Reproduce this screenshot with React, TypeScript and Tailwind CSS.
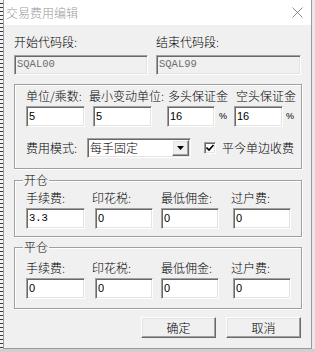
import { ReactNode } from "react"

const cjk = "font-['Noto_Sans_CJK_SC','Microsoft_YaHei',sans-serif] font-light"
const sunken =
    "border border-t-[#a0a0a0] border-l-[#a0a0a0] border-b-white border-r-white shadow-[inset_1px_1px_0_#696969,inset_-1px_-1px_0_#e3e3e3]"
const raised =
    "border border-t-white border-l-white border-b-[#696969] border-r-[#696969] shadow-[inset_-1px_-1px_0_#a0a0a0,inset_1px_1px_0_#e3e3e3]"

const Field = ({
    value,
    w,
    mono = false,
    disabled = false,
    h = "h-[21px]",
}: {
    value: string
    w: string
    mono?: boolean
    disabled?: boolean
    h?: string
}) => (
    <div
        className={`${w} ${h} ${sunken} flex items-center pl-[2px] font-normal ${
            disabled ? "bg-[#f0f0f0] text-[#6d6d6d]" : "bg-white text-black"
        } ${
            mono
                ? "font-['Liberation_Mono',monospace] text-[10.5px]"
                : "font-['Liberation_Sans',sans-serif] text-[11px]"
        }`}
    >
        {value}
    </div>
)

const Label = ({ children, w }: { children: ReactNode; w: string }) => (
    <div className={`${w} shrink-0 text-[12px] leading-[16px] whitespace-nowrap`}>
        {children}
    </div>
)

const Group = ({
    title,
    h,
    pt,
    children,
}: {
    title?: string
    h: string
    pt: string
    children: ReactNode
}) => (
    <div
        className={`relative ${h} ${pt} pl-[11px] border border-[#a0a0a0] shadow-[inset_1px_1px_0_#fff,1px_1px_0_#fff]`}
    >
        {title && (
            <span className="absolute left-[8px] top-[-9px] bg-[#f0f0f0] px-px text-[12px] leading-[16px]">
                {title}
            </span>
        )}
        {children}
    </div>
)

const FeeRows = ({ first }: { first: string }) => (
    <>
        <div className="flex">
            <Label w="w-[66px]">手续费:</Label>
            <Label w="w-[69px]">印花税:</Label>
            <Label w="w-[70px]">最低佣金:</Label>
            <Label w="w-auto">过户费:</Label>
        </div>
        <div className="flex mt-[2px]">
            <Field value={first} w="w-[59px]" mono={first.includes(".")} />
            <div className="ml-[10px]">
                <Field value="0" w="w-[58px]" />
            </div>
            <div className="ml-[8px]">
                <Field value="0" w="w-[58px]" />
            </div>
            <div className="ml-[14px]">
                <Field value="0" w="w-[58px]" />
            </div>
        </div>
    </>
)

const App = () => {
    return (
        <div className={`w-[315px] h-[352px] flex flex-col bg-[#e6e6e6] ${cjk} text-black overflow-hidden`}>
            <div className="flex h-[349px]">
                <div className="w-[3px] h-full bg-[repeating-linear-gradient(to_bottom,#f4f4f4_0px,#f4f4f4_3px,#3a3a3a_3px,#3a3a3a_4px)]" />
                <div className="w-[309px] h-full flex flex-col bg-[#f0f0f0] border-x border-b border-[#9b9b9b]">
                    <div className="h-[25px] shrink-0 bg-white flex items-center justify-between pl-[2px] pr-[8px]">
                        <span className="text-[12px] text-[#9a9a9a] leading-[16px]">交易费用编辑</span>
                        <svg width="11" height="11" viewBox="0 0 11 11">
                            <path d="M0.5 0.5 L10.5 10.5 M10.5 0.5 L0.5 10.5" stroke="#8a8a8a" strokeWidth="1" fill="none" />
                        </svg>
                    </div>

                    <div className="flex flex-col pl-[10px] pr-[9px]">
                        <div className="grid grid-cols-[142px_1fr] mt-[9px]">
                            <Label w="w-auto">开始代码段:</Label>
                            <Label w="w-auto">结束代码段:</Label>
                        </div>
                        <div className="grid grid-cols-[142px_1fr] mt-[5px]">
                            <Field value="SQAL00" w="w-[134px]" h="h-[20px]" mono disabled />
                            <Field value="SQAL99" w="w-[145px]" h="h-[20px]" mono disabled />
                        </div>

                        <div className="mt-[9px]">
                            <Group h="h-[85px]" pt="pt-[3px]">
                                <div className="flex">
                                    <Label w="w-[63px]">单位/乘数:</Label>
                                    <Label w="w-[79px]">最小变动单位:</Label>
                                    <Label w="w-[68px]">多头保证金</Label>
                                    <Label w="w-auto">空头保证金</Label>
                                </div>
                                <div className="flex items-center mt-[2px]">
                                    <Field value="5" w="w-[59px]" />
                                    <div className="ml-[8px]">
                                        <Field value="5" w="w-[59px]" />
                                    </div>
                                    <div className="ml-[15px]">
                                        <Field value="16" w="w-[48px]" />
                                    </div>
                                    <span className="w-[19px] pl-[4px] text-[9px] font-['Liberation_Sans',sans-serif]">%</span>
                                    <Field value="16" w="w-[49px]" />
                                    <span className="pl-[3px] text-[9px] font-['Liberation_Sans',sans-serif]">%</span>
                                </div>
                                <div className="flex items-center mt-[11px]">
                                    <Label w="w-[61px]">费用模式:</Label>
                                    <div className={`w-[104px] h-[20px] ${sunken} bg-white flex items-center justify-between pl-[2px] pr-[1px]`}>
                                        <span className="text-[12px] leading-[16px]">每手固定</span>
                                        <div className={`w-[17px] h-[16px] ${raised} bg-[#f0f0f0] flex items-center justify-center`}>
                                            <svg width="7" height="4" viewBox="0 0 7 4">
                                                <path d="M0 0 H7 L3.5 4 Z" fill="#000" />
                                            </svg>
                                        </div>
                                    </div>
                                    <div className={`ml-[13px] w-[12px] h-[12px] ${sunken} bg-white flex items-center justify-center`}>
                                        <svg width="8" height="8" viewBox="0 0 8 8">
                                            <path d="M0.5 3.5 L3 6 L7.5 1" stroke="#000" strokeWidth="1.6" fill="none" />
                                        </svg>
                                    </div>
                                    <span className="ml-[6px] text-[12px] leading-[16px]">平今单边收费</span>
                                </div>
                            </Group>
                        </div>

                        <div className="mt-[11px]">
                            <Group title="开仓" h="h-[57px]" pt="pt-[9px]">
                                <FeeRows first="3.3" />
                            </Group>
                        </div>

                        <div className="mt-[10px]">
                            <Group title="平仓" h="h-[62px]" pt="pt-[12px]">
                                <FeeRows first="0" />
                            </Group>
                        </div>

                        <div className="flex justify-end gap-[10px] mt-[8px] pr-px">
                            <button className={`w-[75px] h-[21px] ${raised} bg-[#f0f0f0] text-[12px] leading-[16px]`}>确定</button>
                            <button className={`w-[75px] h-[21px] ${raised} bg-[#f0f0f0] text-[12px] leading-[16px]`}>取消</button>
                        </div>
                    </div>
                </div>
                <div className="flex-1 h-full bg-[#e8e8e8]" />
            </div>
            <div className="h-[3px] bg-[#d0d0d0]" />
        </div>
    )
}

export default App
